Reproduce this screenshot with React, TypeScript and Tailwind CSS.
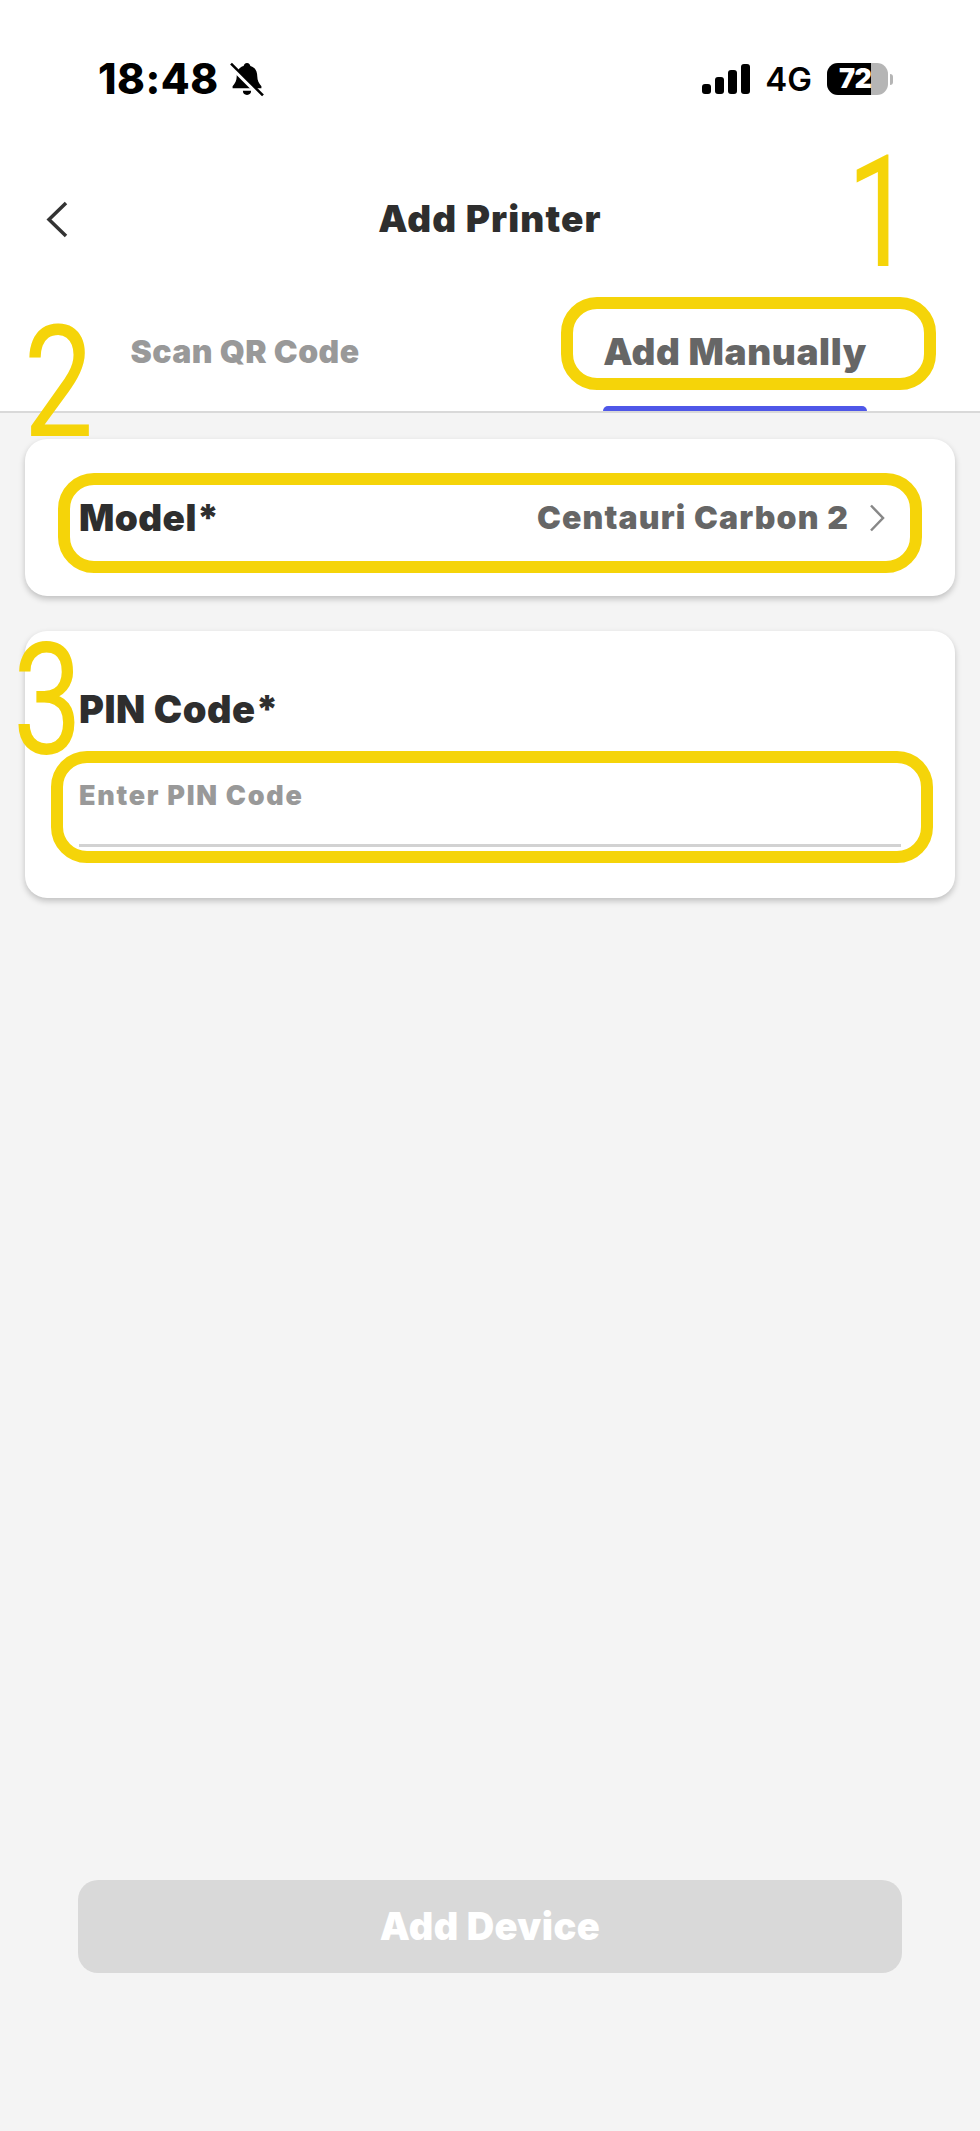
import { useState } from "react";

function StatusBar() {
  return (
    <div className="flex h-[80px] items-center justify-between pl-[98px] pr-[87px]">
      <div className="flex items-center gap-[11px]">
        <span className="text-[42px] font-extrabold leading-none tracking-[0.5px] text-black">18:48</span>
        <svg width="34" height="35" viewBox="0 0 33 34">
          <path
            d="M16.500 1c2 0 3 1.400 3.300 3 4.600 1.200 6.700 5 6.700 10 0 4 1.500 6.500 4 9.500v2H2.500v-2c2.500-3 4-5.500 4-9.500 0-5 2.100-8.800 6.700-10C13.500 2.400 14.500 1 16.500 1z"
            fill="#000"
          />
          <path d="M12.500 28h8a4 4 0 0 1-8 0z" fill="#000" />
          <path d="M1 4.500l28 28" stroke="#fff" strokeWidth="4" />
          <path d="M1 1.500l31 31" stroke="#000" strokeWidth="2.500" />
        </svg>
      </div>
      <div className="flex items-center">
        <div className="flex h-[30px] items-end gap-[4px]">
          <div className="h-[10px] w-[9px] rounded-[3px] bg-black" />
          <div className="h-[17px] w-[9px] rounded-[3px] bg-black" />
          <div className="h-[24px] w-[9px] rounded-[3px] bg-black" />
          <div className="h-[30px] w-[9px] rounded-[3px] bg-black" />
        </div>
        <span className="ml-[15px] text-[33px] font-semibold leading-none text-black">4G</span>
        <div className="relative ml-[15px] flex h-[32px] w-[61px] overflow-hidden rounded-[11px] bg-[#b5b5b5]">
          <div className="w-[44px] bg-black" />
          <span className="absolute left-[12px] top-[3px] text-[27px] font-black leading-[26px] tracking-[-0.5px] text-white">72</span>
        </div>
        <div className="ml-[2px] h-[11px] w-[3px] rounded-r-full bg-[#b5b5b5]" />
      </div>
    </div>
  );
}

function Tabs({ active, onChange }: { active: number; onChange: (i: number) => void }) {
  const tabs = ["Scan QR Code", "Add Manually"];
  return (
    <div className="grid h-[94px] grid-cols-2 border-b-2 border-[#d9d9d9] bg-white">
      {tabs.map((t, i) => (
        <button
          key={t}
          onClick={() => onChange(i)}
          className={
            active === i
              ? "relative flex flex-col items-center pt-[11px] text-[37px] font-black leading-[44px] tracking-[0.6px] text-[#666]"
              : "relative flex flex-col items-center pt-[11px] text-[32px] font-black leading-[44px] tracking-[0.4px] text-[#999]"
          }
        >
          {t}
          {active === i && <span className="absolute bottom-0 h-[5px] w-[264px] rounded-t-[6px] bg-[#4f57e8]" />}
        </button>
      ))}
    </div>
  );
}

export default function App() {
  const [tab, setTab] = useState(1);
  const [pin, setPin] = useState("");

  return (
    <div className="relative flex h-[2131px] flex-col overflow-hidden bg-[#f4f4f4] font-['Inter',sans-serif]">
      <div className="bg-white pt-[39px]">
        <StatusBar />
        <div className="relative flex h-[200px] items-center justify-center">
          <svg className="absolute left-[46px] top-[82px]" width="22" height="37" viewBox="0 0 22 37" fill="none">
            <path d="M20 2L3 18.500 20 35" stroke="#333" strokeWidth="3.500" />
          </svg>
          <h1 className="pb-[2px] text-[37px] font-black leading-none tracking-[1.1px] text-[#2e2e2e]">Add Printer</h1>
        </div>
      </div>
      <Tabs active={tab} onChange={setTab} />

      <div className="flex flex-1 flex-col gap-[35px] px-[25px] pt-[26px]">
        <div className="flex h-[157px] items-center justify-between rounded-[22px] bg-white pl-[54px] pr-[70px] shadow-[0_3px_6px_rgba(0,0,0,0.22)]">
          <span className="text-[37px] font-black tracking-[0.4px] text-[#2e2e2e]">Model*</span>
          <div className="flex items-center gap-[20px]">
            <span className="text-[32px] font-black tracking-[1.15px] text-[#666]">Centauri Carbon 2</span>
            <svg width="16" height="28" viewBox="0 0 16 28" fill="none">
              <path d="M2 1.500L14 14 2 26.500" stroke="#888" strokeWidth="2.500" />
            </svg>
          </div>
        </div>

        <div className="flex h-[267px] flex-col rounded-[22px] bg-white px-[54px] pt-[54px] shadow-[0_3px_6px_rgba(0,0,0,0.22)]">
          <span className="text-[38px] font-black leading-[48px] tracking-[0.5px] text-[#2e2e2e]">PIN Code*</span>
          <input
            value={pin}
            onChange={(e) => setPin(e.target.value)}
            placeholder="Enter PIN Code"
            className="mt-[20px] h-[94px] w-full border-b-[3px] border-[#d2d2d2] pb-[7px] text-[27px] font-black tracking-[1.7px] text-[#2e2e2e] outline-none placeholder:text-[#999]"
          />
        </div>
      </div>

      <div className="px-[78px] pb-[158px]">
        <button className="h-[93px] w-full rounded-[20px] bg-[#d9d9d9] text-[38px] font-black tracking-[0.4px] text-white">
          Add Device
        </button>
      </div>

      {/* callouts laid over the form */}
      <div className="absolute left-[561px] top-[297px] h-[93px] w-[375px] rounded-[36px] border-[12px] border-[#f5d409]" />
      <div className="absolute left-[58px] top-[473px] h-[100px] w-[864px] rounded-[36px] border-[12px] border-[#f5d409]" />
      <div className="absolute left-[51px] top-[751px] h-[112px] w-[882px] rounded-[36px] border-[12px] border-[#f5d409]" />
      <span className="absolute left-[836px] top-[136px] scale-x-[0.75] font-['Roboto',sans-serif] text-[155px] font-normal leading-[155px] text-[#f5d409]">1</span>
      <span className="absolute left-[15px] top-[306px] scale-x-[0.8] font-['Roboto',sans-serif] text-[155px] font-normal leading-[155px] text-[#f5d409]">2</span>
      <span className="absolute left-[4px] top-[623px] scale-x-[0.8] font-['Roboto',sans-serif] text-[155px] font-normal leading-[155px] text-[#f5d409]">3</span>
    </div>
  );
}
